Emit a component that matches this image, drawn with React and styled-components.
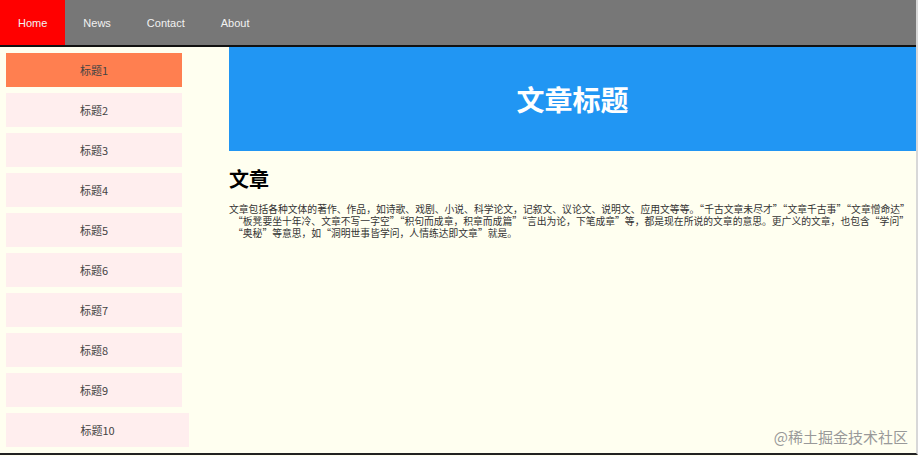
import React from "react";
import styled, { createGlobalStyle } from "styled-components";

const GlobalStyle = createGlobalStyle`
  body {
    margin: 0;
    background: #fffff0;
    font-family: "Noto Sans CJK SC", sans-serif;
  }
`;

const Page = styled.div`
  position: relative;
  width: 916px;
  border-right: 2px solid #d8d8d8;
  border-bottom: 2px solid #222;
`;

const NavBar = styled.ul`
  display: flex;
  margin: 0;
  padding: 0;
  list-style: none;
  height: 45px;
  background: #777;
  border-bottom: 2px solid #111;
`;

const NavItem = styled.li`
  display: flex;
  align-items: center;
  padding: 0 18px;
  font-family: "Liberation Sans", sans-serif;
  font-size: 11px;
  color: #f2f2f2;
  background: ${props => (props.active ? "#ff0000" : "transparent")};
`;

const Body = styled.div`
  display: flex;
`;

const SideBar = styled.div`
  width: 229px;
  flex-shrink: 0;
  display: flex;
  flex-direction: column;
  gap: 6px;
  padding: 6px 0 6px 6px;
  box-sizing: border-box;
`;

const SideItem = styled.div`
  width: ${props => props.width}px;
  height: 34px;
  display: flex;
  align-items: center;
  justify-content: center;
  font-size: 11px;
  color: #444;
  background: ${props => (props.active ? "#ff7f50" : "#ffeeee")};
`;

const Main = styled.div`
  flex: 1;
  min-width: 0;
`;

const Banner = styled.div`
  height: 104px;
  background: #2196f3;
  display: flex;
  align-items: center;
  justify-content: center;
`;

const BannerTitle = styled.h1`
  margin: 0;
  color: #fff;
  font-size: 28px;
  font-weight: bold;
`;

const ArticleTitle = styled.h2`
  margin: 14px 0 10px;
  font-size: 20px;
  line-height: 28px;
  color: #000;
`;

const ArticleText = styled.div`
  padding-right: ${props => props.gap}px;
  font-size: 9.8px;
  line-height: 12px;
  color: #333;
`;

const Line = styled.div`
  text-align: justify;
  text-align-last: ${props => (props.fill ? "justify" : "left")};
  padding-left: ${props => (props.indent ? 4 : 0)}px;
`;

const Watermark = styled.div`
  position: absolute;
  right: 8px;
  bottom: 6px;
  font-size: 15px;
  color: #999;
`;

const navs = ["Home", "News", "Contact", "About"];

const lines = [
  { t: "文章包括各种文体的著作、作品，如诗歌、戏剧、小说、科学论文，记叙文、议论文、说明文、应用文等等。“千古文章未尽才”“文章千古事”“文章憎命达”", fill: true },
  { t: "“板凳要坐十年冷、文章不写一字空”“积句而成章，积章而成篇”“言出为论，下笔成章”等，都是现在所说的文章的意思。更广义的文章，也包含“学问”", fill: true, indent: true },
  { t: "“奥秘”等意思，如“洞明世事皆学问，人情练达即文章”就是。", indent: true },
];

export default function App() {
  const items = Array.from({ length: 10 }, (_, i) => i + 1);
  return (
    <>
      <GlobalStyle />
      <Page lang="zh-CN">
        <NavBar>
          {navs.map((n, i) => (
            <NavItem key={n} active={i === 0}>
              {n}
            </NavItem>
          ))}
        </NavBar>
        <Body>
          <SideBar>
            {items.map(n => (
              <SideItem key={n} active={n === 1} width={n === 10 ? 183 : 176}>
                标题{n}
              </SideItem>
            ))}
          </SideBar>
          <Main>
            <Banner>
              <BannerTitle>文章标题</BannerTitle>
            </Banner>
            <ArticleTitle>文章</ArticleTitle>
            <ArticleText gap={8}>
              {lines.map((l, i) => (
                <Line key={i} fill={l.fill} indent={l.indent}>
                  {l.t}
                </Line>
              ))}
            </ArticleText>
          </Main>
        </Body>
        <Watermark>@稀土掘金技术社区</Watermark>
      </Page>
    </>
  );
}
